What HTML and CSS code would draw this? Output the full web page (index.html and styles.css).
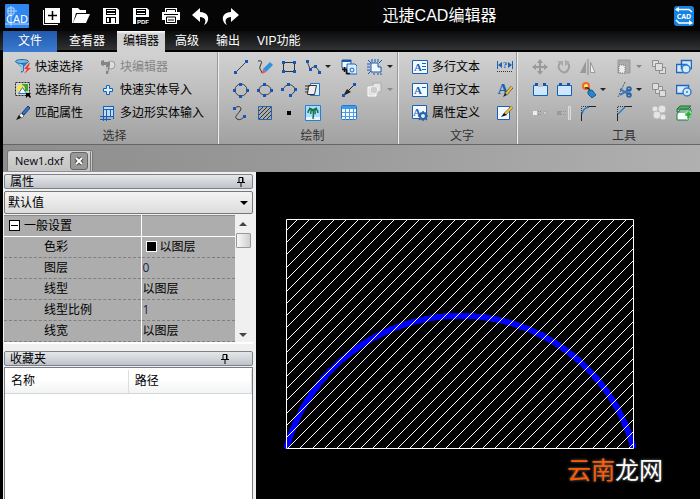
FILE: index.html
```
<!DOCTYPE html>
<html lang="zh-CN">

<head>
  <meta charset="UTF-8">
  <meta name="viewport" content="width=device-width, initial-scale=1.0">
  <title>迅捷CAD编辑器</title>
  <link rel="stylesheet" href="styles.css">
</head>

<body>
  <header class="titlebar">
    <svg class="logo" viewBox="0 0 24 24">
      <rect width="24" height="24" rx="1" fill="#2f86f0" />
      <path d="M2 7H12M6 2V22M3 4H9V10H3zM0 20H24" fill="none" stroke="#b9dcff" />
      <text x="12" y="19" text-anchor="middle" class="logo-text">CAD</text>
    </svg>
    <nav class="quick">
      <button aria-label="新建"><svg viewBox="0 0 20 20"><path d="M4 2H19V17H4z" fill="#fff" /><path d="M2.500 4V18.500H17" fill="none" stroke="#fff" /><path d="M11.500 5V14M7 9.500H16" stroke="#000" stroke-width="1.500" /></svg></button>
      <button aria-label="打开"><svg viewBox="0 0 20 20"><path d="M1 17V2H7L9 4H15V7H5L2 17z" fill="#fff" /><path d="M6 8H19L15 17H2z" fill="#fff" /></svg></button>
      <button aria-label="保存"><svg viewBox="0 0 20 20"><path d="M2 2H16L18 4V18H2z" fill="#fff" /><path d="M5 3H15V9H5zM5 11H15V17H5z" fill="#000" /><path d="M6 4H14V5H6zM6 7H14V8H6zM10 12H14V17H10zM6 12H8V16H6z" fill="#fff" /></svg></button>
      <button aria-label="导出PDF"><svg viewBox="0 0 20 20"><path d="M2 2H16L18 4V18H2z" fill="#fff" /><path d="M5 3H15V9H5z" fill="#000" /><path d="M6 4H14V5H6zM6 7H14V8H6z" fill="#fff" /><path d="M5 11H19V19H5z" fill="#000" /><text x="12" y="18" text-anchor="middle" class="pdf-text">PDF</text></svg></button>
      <button aria-label="打印"><svg viewBox="0 0 20 20"><path d="M4 2H16V6H19V14H16V18H4V14H1V6H4z" fill="#fff" /><path d="M5.500 6V3.500H14.500V6M3 8.500H17M5.500 11H14.500V16.500H5.500zM7 14H13" fill="none" stroke="#000" /></svg></button>
      <button aria-label="撤销"><svg viewBox="0 0 20 20"><path d="M1 9L9 2V6C15 6 18 10 17 14Q16 18 13 19C16 15 14 11 9 11V16z" fill="#fff" /></svg></button>
      <button aria-label="重做"><svg viewBox="0 0 20 20"><path d="M18 9L10 2V6C4 6 1 10 2 14Q3 18 6 19C3 15 5 11 10 11V16z" fill="#fff" /></svg></button>
    </nav>
    <h1>迅捷CAD编辑器</h1>
    <button class="convert" aria-label="转换">
      <svg viewBox="0 0 20 20"><rect width="20" height="20" rx="3" fill="#1683df" /><path d="M2 3.500H15L18 6M18 17H5L2 14" fill="none" stroke="#fff" stroke-width="1.500" /><path d="M1 3.500L5 1V6zM19 17L15 14V19z" fill="#fff" /><text x="10" y="13" text-anchor="middle" class="convert-text">CAD</text></svg>
    </button>
  </header>

  <nav class="menu">
    <a href="#" class="file">文件</a>
    <a href="#" class="viewer">查看器</a>
    <a href="#" class="active">编辑器</a>
    <a href="#">高级</a>
    <a href="#">输出</a>
    <a href="#">VIP功能</a>
  </nav>

  <main class="app">
    <div class="ribbon">
      <!-- 选择 -->
      <section class="group group-select">
        <div class="tools">
          <button><svg viewBox="0 0 16 16"><path d="M0 2L6 8V14L9 12V8L14 2z" fill="#2b7cba" /><path d="M3 3L7 7V12" fill="none" stroke="#8fc8ee" stroke-width="2" /><ellipse cx="7" cy="2.500" rx="6.500" ry="2" fill="#78b8e6" stroke="#226ba5" /><path d="M14 4L9 10H12L9 15L16 9H13L15 4z" fill="#f23a32" /></svg>快速选择</button>
          <button disabled><svg viewBox="0 0 16 16"><circle cx="11" cy="6" r="4" fill="#ddd" stroke="#999" /><path d="M1 3H10V6H1zM6 6H10L8 15H6zM1 2L4 1V7L1 6z" fill="#858585" /><path d="M7 8V12" stroke="#eee" /></svg>块编辑器</button>
          <button><svg viewBox="0 0 16 16"><path d="M.500 .500H14.500V13.500H.500z" fill="#d5d5d0" stroke="#222" stroke-dasharray="2 1" /><path d="M7 2H13V9H7z" fill="#38a535" /><circle cx="6" cy="7" r="4" fill="#f8e351" /><path d="M3.500 11.500L7.500 5.500L11.500 11.500z" fill="#f7fbff" stroke="#2679c9" /><path d="M11 11H16L14.500 12.500L16 15L15 16L13 14L11 16z" fill="#000" /></svg>选择所有</button>
          <button><svg viewBox="0 0 16 16"><path d="M6.500 3.500H9.500V6.500H12.500V9.500H9.500V12.500H6.500V9.500H3.500V6.500H6.500z" fill="#dceeff" stroke="#1162ba" /></svg>快速实体导入</button>
          <button><svg viewBox="0 0 16 16"><path d="M13 1L7 8L9 10L15 3z" fill="#3475c9" stroke="#163b77" /><path d="M6 8L9 11L7 13L4 11z" fill="#f2f2f2" stroke="#777" /><path d="M4 10L6 13L1 15z" fill="#111" /></svg>匹配属性</button>
          <button><svg viewBox="0 0 16 16"><path d="M3 1H14V12H3z" fill="#c4ddf5" /><path d="M3.500 1V16M13.500 1V14M3 1.500H14M0 11.500H14M6.500 4V16M3 4.500H14M0 14.500H11M10.500 4V12" fill="none" stroke="#1260ba" /></svg>多边形实体输入</button>
        </div>
        <h2>选择</h2>
      </section>

      <!-- 绘制 -->
      <section class="group group-draw">
        <div class="tools">
          <button aria-label="直线"><svg viewBox="0 0 16 16"><path d="M3 13L13 3" stroke="#444" /><path d="M1 12H4V15H1zM12 1H15V4H12z" class="node" /></svg></button>
          <button aria-label="手绘"><svg viewBox="0 0 16 16"><path d="M1 2Q6 1 4 5T3 10T5 14" fill="none" stroke="#333" /><path d="M13 3L16 6L9 13L6 10z" fill="#3391e2" /><path d="M6 10L9 13L5 15z" fill="#e8505a" /></svg></button>
          <button aria-label="矩形"><svg viewBox="0 0 16 16"><path d="M2.500 3.500H13.500V12.500H2.500z" fill="none" stroke="#333" /><path d="M1 2H4V5H1zM12 2H15V5H12zM1 11H4V14H1zM12 11H15V14H12z" class="node" /></svg></button>
          <button aria-label="多段线" class="drop"><svg viewBox="0 0 16 16"><path d="M2 2L5 10L10 7L15 13" fill="none" stroke="#444" /><path d="M1 1H4V4H1zM4 9H7V12H4zM9 6H12V9H9zM13 12H16V15H13z" class="node" /></svg></button>
          <button aria-label="插入块"><svg viewBox="0 0 16 16"><path d="M1 1H10V9H1z" fill="#f7fbff" stroke="#155caf" /><path d="M1 1H10V3H1z" fill="#155caf" /><path d="M6 5H14L16 7V15H6z" fill="#dcecff" stroke="#1667bd" /><path d="M1 10.500H6M3.500 8V13M5.500 11V14.500H9" fill="none" stroke="#111" stroke-width="1.500" /><circle cx="11" cy="11" r="2" fill="none" stroke="#1667bd" /></svg></button>
          <button aria-label="云线" class="drop"><svg viewBox="0 0 16 16"><path d="M4 4H11V8H14V13H4z" fill="#f0f7ff" stroke="#1758aa" /><path d="M1 1L4 4M5 0V3M8 0V3M11 0V3M15 1L12 4M0 5H3M0 8H3M0 11H3M1 15L4 12M7 16V14M11 16V14M14 16V14" stroke="#1758aa" /></svg></button>

          <button aria-label="圆"><svg viewBox="0 0 16 16"><circle cx="8" cy="8" r="6" fill="none" stroke="#444" /><path d="M6 1H9V4H6zM6 13H9V16H6zM0 7H3V10H0zM13 7H16V10H13z" class="node" /></svg></button>
          <button aria-label="椭圆"><svg viewBox="0 0 16 16"><ellipse cx="8" cy="8" rx="6" ry="5" fill="none" stroke="#444" /><path d="M6 1H9V4H6zM6 12H9V15H6zM0 7H3V10H0zM13 7H16V10H13z" class="node" /></svg></button>
          <button aria-label="圆弧"><svg viewBox="0 0 16 16"><path d="M2 7Q7 -1 13 5Q16 9 10 13" fill="none" stroke="#444" /><path d="M0 6H3V9H0zM6 1H9V4H6zM13 6H16V9H13zM8 12H11V15H8z" class="node" /></svg></button>
          <button aria-label="复制轮廓"><svg viewBox="0 0 16 16"><path d="M5.500 1.500H14.500V13.500H5.500z" fill="#dfeeff" stroke="#2375c8" /><path d="M3.500 3.500H11.500L9.500 12.500H2.500z" fill="#eee" stroke="#333" /><path d="M0 4H5M0 7H4M0 10H3" stroke="#333" /></svg></button>
          <button aria-label="引线"><svg viewBox="0 0 16 16"><path d="M3 13L14 2" stroke="#222" /><path d="M2 14L6 7L10 10z" fill="#222" /><path d="M1 12H4V15H1zM12 1H15V4H12z" class="node" /></svg></button>
          <button aria-label="布尔" class="drop off"><svg viewBox="0 0 16 16"><path d="M6 1H14V10H6z" fill="#e5e5e5" stroke="#aaa" /><path d="M1 5H9V14H1z" fill="#ddd" stroke="#fff" /><circle cx="7" cy="8" r="4" fill="#ccc" stroke="#f1f1f1" /></svg></button>

          <button aria-label="样条曲线"><svg viewBox="0 0 16 16"><path d="M2 3C5 0 10 2 7 6S1 12 4 14S10 13 12 11" fill="none" stroke="#333" /><path d="M0 2H3V5H0zM10 10H13V13H10z" class="node" /></svg></button>
          <button aria-label="填充"><svg viewBox="0 0 16 16"><path d="M1.500 1.500H14.500V14.500H1.500z" fill="#aaa" stroke="#2164b2" /><path d="M2 6L6 2M2 10L10 2M2 14L14 2M6 14L14 6M10 14L14 10" stroke="#333" /></svg></button>
          <button aria-label="点"><svg viewBox="0 0 16 16"><path d="M6 6H10V10H6z" fill="#000" /></svg></button>
          <button aria-label="图像"><svg viewBox="0 0 16 16"><path d="M.500 .500H15.500V15.500H.500z" fill="#a9ddff" stroke="#2282d1" /><path d="M1 12H15V15H1z" fill="#e8f4fb" /><path d="M8 14Q9 9 8 5M8 5Q3 3 3 8M8 5Q5 5 6 9M8 5Q13 3 13 8M8 5Q11 5 10 9M8 5L4 3M8 5L12 3" fill="none" stroke="#167349" stroke-width="1.500" /></svg></button>
          <button aria-label="表格"><svg viewBox="0 0 16 16"><rect x=".500" y=".500" width="15" height="14" rx="1" fill="#f5faff" stroke="#1d77d3" /><path d="M1 1H15V4H1z" fill="#3b9bf2" /><path d="M4.500 4V15M8.500 4V15M12.500 4V15M1 7.500H15M1 11.500H15" stroke="#4f9de0" /></svg></button>
        </div>
        <h2>绘制</h2>
      </section>

      <!-- 文字 -->
      <section class="group group-text">
        <div class="tools">
          <button><svg viewBox="0 0 16 16"><path d="M.500 1.500H15.500V14.500H.500z" class="sheet" /><text x="6" y="12" text-anchor="middle" class="letter">A</text><path d="M10 4.500H14M10 7.500H14M10 10.500H14" stroke="#1862b6" /></svg>多行文本</button>
          <button aria-label="标注"><svg viewBox="0 0 16 16"><path d="M.500 2V10M15.500 2V10" stroke="#1862b6" /><path d="M1 6L5 3V9zM15 6L11 3V9z" fill="#1862b6" /><text x="8" y="9" text-anchor="middle" class="letter small">?</text><path d="M0 12.500H16" stroke="#333" stroke-dasharray="1 1" /></svg></button>
          <button><svg viewBox="0 0 16 16"><path d="M.500 1.500H15.500V14.500H.500z" class="sheet" /><text x="6" y="12" text-anchor="middle" class="letter">A</text><path d="M10 5.500H14" stroke="#1862b6" /></svg>单行文本</button>
          <button aria-label="文字样式"><svg viewBox="0 0 16 16"><text x="6" y="12" text-anchor="middle" class="letter big">A</text><path d="M15 5L9 12" stroke="#444" stroke-width="3" /><path d="M15 5L9 12" stroke="#f1c232" stroke-width="2" /><path d="M8 11L10 13L6 15z" fill="#222" /></svg></button>
          <button><svg viewBox="0 0 16 16"><path d="M.500 .500H14.500V13.500H.500z" class="sheet" /><text x="5" y="11" text-anchor="middle" class="letter">A</text><circle cx="11" cy="11" r="3" fill="#dcecff" stroke="#2b62a4" stroke-width="2" /><path d="M11 6V8M11 14V16M6 11H8M14 11H16M8 8L9 9M13 13L15 15M15 7L13 9M9 13L7 15" stroke="#2b62a4" stroke-width="1.500" /></svg>属性定义</button>
          <button aria-label="编辑文字"><svg viewBox="0 0 16 16"><path d="M.500 1.500H12.500V14.500H.500z" class="sheet" /><path d="M15 2L8 9" stroke="#444" stroke-width="3" /><path d="M15 2L8 9" stroke="#f1c232" stroke-width="2" /><path d="M7 8L10 10L4 12z" fill="#111" /></svg></button>
        </div>
        <h2>文字</h2>
      </section>

      <!-- 工具 -->
      <section class="group group-tools">
        <div class="tools">
          <button aria-label="移动"><svg viewBox="0 0 16 16"><path d="M8 2V14M2 8H14" stroke="#999" stroke-width="2" /><path d="M8 0L11 4H5zM8 16L5 12H11zM0 8L4 5V11zM16 8L12 5V11z" fill="#999" /></svg></button>
          <button aria-label="旋转"><svg viewBox="0 0 16 16"><path d="M5 3Q0 8 5 12T13 9M10 3Q15 6 12 11" fill="none" stroke="#a0a0a0" stroke-width="2" /><path d="M1 2H7V7zM9 7V1L14 3z" fill="#aaa" /></svg></button>
          <button aria-label="镜像"><svg viewBox="0 0 16 16"><path d="M6 2V14H0z" fill="#989898" /><path d="M10.500 3V13.500H15z" fill="#eee" stroke="#999" /><path d="M8 0V16" stroke="#888" /></svg></button>
          <button aria-label="缩放" class="drop off"><svg viewBox="0 0 16 16"><path d="M2 1H14V14H2z" fill="#aaa" stroke="#999" /><path d="M3 6H9V14H3z" fill="#ececec" stroke="#777" stroke-dasharray="1 1" /></svg></button>
          <button aria-label="前置"><svg viewBox="0 0 16 16"><path d="M1.500 1.500H7.500V7.500H1.500zM8.500 8.500H14.500V14.500H8.500z" class="gray-box" /><path d="M4.500 4.500H11.500V11.500H4.500z" class="gray-box" /></svg></button>
          <button aria-label="区域"><svg viewBox="0 0 16 16"><path d="M5.500 1.500H15.500V9.500H5.500zM.500 5.500H10.500V13.500H.500z" fill="#d9ebff" stroke="#1d68bd" stroke-width="1.500" /><circle cx="10" cy="10" r="4" fill="#d5e9ff" stroke="#347ec9" stroke-width="1.500" /></svg></button>

          <button aria-label="打断"><svg viewBox="0 0 16 16"><path d="M1.500 3.500H15.500V13.500H1.500z" fill="#cfe6ff" stroke="#1460b5" /><path d="M6 3H11V5H6z" fill="#c1c1c1" /><path d="M3 1H6V4H3zM11 1H14V4H11z" class="node" /></svg></button>
          <button aria-label="合并"><svg viewBox="0 0 16 16"><path d="M1.500 3.500H15.500V13.500H1.500z" fill="#cfe6ff" stroke="#1460b5" /><path d="M3 1H6V4H3zM11 1H14V4H11z" class="node" /></svg></button>
          <button aria-label="分解" class="drop"><svg viewBox="0 0 16 16"><circle cx="6" cy="4" r="4" fill="#f26722" /><circle cx="6" cy="4" r="2" fill="#ffe777" /><path d="M5 6Q9 5 10 9" fill="none" stroke="#333" stroke-width="1.500" /><path d="M8 9L12 8L16 13L12 16L8 12z" fill="#2586cb" stroke="#185994" /></svg></button>
          <button aria-label="修剪" class="drop"><svg viewBox="0 0 16 16"><path d="M9 0L2 15" stroke="#555" stroke-dasharray="2 1" /><path d="M4 7L14 13M4 13L14 7" stroke="#3574b7" stroke-width="2" /><circle cx="13" cy="7" r="2" fill="none" stroke="#235fa5" stroke-width="1.500" /><circle cx="13" cy="13" r="2" fill="none" stroke="#235fa5" stroke-width="1.500" /></svg></button>
          <button aria-label="后置"><svg viewBox="0 0 16 16"><path d="M4.500 4.500H11.500V11.500H4.500z" class="gray-box" /><path d="M1.500 1.500H7.500V7.500H1.500zM8.500 8.500H14.500V14.500H8.500z" class="gray-box" /></svg></button>
          <button aria-label="查找区域"><svg viewBox="0 0 16 16"><path d="M.500 3.500H12.500V11.500H.500z" fill="#d9ebff" stroke="#1d68bd" stroke-width="1.500" /><circle cx="11" cy="10" r="4" fill="#d5e9ff" stroke="#347ec9" stroke-width="1.500" /><circle cx="11" cy="10" r="1" fill="#347ec9" /></svg></button>

          <button aria-label="对齐"><svg viewBox="0 0 16 16"><path d="M1 6H5V10H1z" fill="#eee" /><path d="M6 6.500H10M6 9.500H10" stroke="#888" stroke-dasharray="1 1" /><path d="M11.500 6.500H14.500V9.500H11.500z" fill="#ccc" stroke="#aaa" /></svg></button>
          <button aria-label="延伸"><svg viewBox="0 0 16 16"><path d="M1 6H5V10H1z" fill="#999" /><path d="M5 6.500H11M5 9.500H11" stroke="#999" stroke-dasharray="1 1" /><path d="M12.500 1.500H14.500V14.500H12.500z" fill="#bbb" stroke="#ddd" /></svg></button>
          <button aria-label="圆角"><svg viewBox="0 0 16 16"><path d="M1.500 16V8M8 1.500H16" stroke="#222" /><path d="M1.500 8V1.500H8" fill="none" stroke="#333" stroke-dasharray="1 1" /><path d="M2 9Q3 3 9 2" fill="none" stroke="#267ccb" stroke-width="1.500" /></svg></button>
          <button aria-label="倒角"><svg viewBox="0 0 16 16"><path d="M1.500 16V9M9 1.500H16" stroke="#222" /><path d="M1.500 9V1.500H9" fill="none" stroke="#333" stroke-dasharray="1 1" /><path d="M2 9L9 2" stroke="#267ccb" stroke-width="1.500" /></svg></button>
          <button aria-label="编组"><svg viewBox="0 0 16 16"><circle cx="4" cy="4" r="3" class="ball" /><circle cx="11" cy="4" r="4" class="ball" /><circle cx="6" cy="10" r="4" class="ball" /><circle cx="12" cy="12" r="3" class="ball" /></svg></button>
          <button aria-label="新建图层"><svg viewBox="0 0 16 16"><path d="M1 9L4 5H15V12L12 15H1z" fill="#f5fff5" stroke="#217747" /><path d="M1 4L4 1H15L12 4z" fill="#58ae65" stroke="#167738" /><path d="M1 4V7H12L15 3" fill="none" stroke="#167738" /><path d="M9 8H11V6H14V8H16V11H14V14H11V11H9z" fill="#2daf3c" stroke="#fff" stroke-width=".500" /></svg></button>
        </div>
        <h2>工具</h2>
      </section>
    </div>

    <div class="doc-tabs">
      <div class="doc-tab">
        <span>New1.dxf</span>
        <button aria-label="关闭"><svg viewBox="0 0 10 10"><path d="M2 2L8 8M8 2L2 8" stroke="#564d3a" stroke-width="4" /><path d="M2 2L8 8M8 2L2 8" stroke="#fff" stroke-width="2" /></svg></button>
      </div>
    </div>

    <div class="workspace">
      <aside class="side">
        <div class="panel-title">
          <span>属性</span>
          <button aria-label="固定属性"><svg viewBox="0 0 8 10"><path d="M2 .500H6V5.500H2zM0 5.500H8M4 6V10M5.500 1V5" fill="none" stroke="#000" /></svg></button>
        </div>
        <div class="preset">
          <select aria-label="默认值">
            <option>默认值</option>
          </select>
        </div>
        <div class="props">
          <table>
            <tr class="section"><th><i class="minus"></i>一般设置</th><td></td></tr>
            <tr><th>色彩</th><td><i class="swatch"></i>以图层</td></tr>
            <tr><th>图层</th><td class="num">0</td></tr>
            <tr><th>线型</th><td>以图层</td></tr>
            <tr><th>线型比例</th><td class="num">1</td></tr>
            <tr><th>线宽</th><td>以图层</td></tr>
          </table>
          <div class="scroll">
            <i class="up"></i>
            <i class="thumb"></i>
            <i class="down"></i>
          </div>
        </div>

        <div class="panel-title favorites-title">
          <span>收藏夹</span>
          <button aria-label="固定收藏夹"><svg viewBox="0 0 8 10"><path d="M2 .500H6V5.500H2zM0 5.500H8M4 6V10M5.500 1V5" fill="none" stroke="#000" /></svg></button>
        </div>
        <div class="favorites">
          <table>
            <tr><th>名称</th><th>路径</th></tr>
          </table>
        </div>
      </aside>

      <section class="drawing">
        <svg class="sheet-area">
          <clipPath id="frame"><rect x="30" y="47" width="347" height="229" /></clipPath>
          <path d="M31 274A180 180 0 0 1 377 274" fill="none" stroke="#00f" stroke-width="6" stroke-linecap="round" shape-rendering="crispEdges" />
          <path id="hatch" clip-path="url(#frame)" stroke="#fff" shape-rendering="crispEdges" />
          <path d="M30.500 47.500H377.500V276.500H30.500z" fill="none" stroke="#fff" />
        </svg>
        <div class="watermark"><b>云南</b>龙网</div>
      </section>
    </div>
  </main>

  <script>
    // 45 degree hatch lines inside the frame, snapped to pixel centres
    const step = 12.175;
    const frameTop = 47.5;
    const frameBottom = 276.5;
    let d = '';
    for (let i = 0; i < 48; i++) {
      const x = 41.5 + Math.round(i * step);
      d += `M${x} ${frameTop}L${x - (frameBottom - frameTop)} ${frameBottom}`;
    }
    document.querySelector('#hatch').setAttribute('d', d);
  </script>
</body>

</html>
```
FILE: styles.css
```
* {
  box-sizing: border-box;
}

body {
  margin: 0;
  min-height: 100vh;
  display: flex;
  flex-direction: column;
  background: #000;
  color: #000;
  font: 12px/16px "Liberation Sans", "Noto Sans CJK SC", sans-serif;
}

button {
  margin: 0;
  padding: 0;
  border: 0;
  background: none;
  color: inherit;
  font: inherit;
}

svg {
  display: block;
  flex: none;
}

h1,
h2 {
  margin: 0;
  font-weight: normal;
}

table {
  border-collapse: collapse;
  table-layout: fixed;
  width: 100%;
}

th,
td {
  padding: 0;
  font-weight: normal;
  text-align: left;
}

/* title bar */
.titlebar {
  display: flex;
  align-items: center;
  height: 31px;
  padding: 0 6px 0 5px;
  background: #050505;
  color: #fff;
}

.logo {
  width: 24px;
  height: 24px;
}

.logo-text {
  fill: #fff;
  font: 11px "Noto Sans", sans-serif;
}

.quick {
  display: flex;
  gap: 10px;
  margin-left: 12px;
}

.quick svg {
  width: 20px;
  height: 20px;
}

.pdf-text {
  fill: #fff;
  font: bold 6px "Liberation Sans", sans-serif;
}

.titlebar h1 {
  flex: 1;
  padding-right: 36px;
  font-size: 16px;
  line-height: 24px;
  text-align: center;
}

.convert svg {
  width: 20px;
  height: 20px;
}

.convert-text {
  fill: #fff;
  font: bold 7px "Noto Sans", sans-serif;
}

/* menu */
.menu {
  display: flex;
  height: 21px;
  padding-left: 3px;
  background: linear-gradient(#0b0b0b, #303234 90%, #000 91%);
}

.menu a {
  padding: 0 9px 0 8px;
  color: #fff;
  line-height: 21px;
  text-decoration: none;
}

.menu .file {
  width: 54px;
  padding: 0;
  background: linear-gradient(#2159ad, #3b7bd0);
  text-align: center;
}

.menu .viewer {
  padding: 0 12px;
}

.menu .active {
  padding: 0 6px;
  margin-right: 2px;
  background: linear-gradient(#fff, #d0d0d0 3px);
  color: #000;
}

/* ribbon */
.app {
  flex: 1;
  display: flex;
  flex-direction: column;
  margin-left: 3px;
}

.ribbon {
  display: flex;
  border-bottom: 1px solid #666;
  background: linear-gradient(#d2d2d2, #bdbdbd 45%, #a1a1a1);
}

.group {
  padding-top: 3px;
  border-right: 1px solid #eee;
  box-shadow: inset -1px 0 #999;
}

.group h2 {
  padding: 4px 0 0 8px;
  font-size: 12px;
  line-height: 16px;
  text-align: center;
  color: #333;
}

.tools {
  display: grid;
  grid-auto-rows: 23px;
}

.tools button {
  display: flex;
  align-items: center;
  gap: 4px;
  white-space: nowrap;
}

.tools button:disabled {
  color: #858585;
}

.tools svg {
  width: 16px;
  height: 16px;
}

.drop::after {
  content: "";
  border: 3px solid transparent;
  border-top-color: #222;
  border-bottom: 0;
}

.drop.off::after {
  border-top-color: #888;
}

.group-select {
  flex: 0 0 216px;
}

.group-select .tools {
  padding-left: 12px;
  grid-template-columns: 85px 1fr;
}

.group-draw {
  flex: 0 0 180px;
}

.group-draw .tools {
  padding-left: 14px;
  grid-template-columns: 24px 24px 24px 36px 26px 24px;
}

.group-text {
  flex: 0 0 119px;
}

.group-text .tools {
  padding-left: 13px;
  grid-template-columns: 85px 16px;
}

.group-tools {
  flex: 1;
  border: 0;
  box-shadow: none;
}

.group-tools .tools {
  padding-left: 14px;
  grid-template-columns: 24px 24px 36px 35px 25px 16px;
}

.group-tools h2 {
  width: 204px;
}

.node {
  fill: #1555b5;
}

.sheet {
  fill: #f4f9ff;
  stroke: #1862b6;
}

.letter {
  fill: #1862b6;
  font: bold 11px "Liberation Serif", serif;
}

.letter.small {
  font-size: 9px;
}

.letter.big {
  font-size: 15px;
}

.gray-box {
  fill: #ddd;
  stroke: #8e8e8e;
}

.ball {
  fill: #e5e5e5;
  stroke: #bbb;
}

/* document tabs */
.doc-tabs {
  display: flex;
  height: 27px;
  padding: 5px 4px 0;
  background: linear-gradient(90deg, #8e8e8e, #989898 40%, #b0b0b0);
}

.doc-tab {
  display: flex;
  align-items: center;
  justify-content: space-between;
  width: 86px;
  height: 21px;
  padding: 0 2px 0 7px;
  border: 1px solid #777;
  border-right: 3px double #777;
  border-bottom: 0;
  border-radius: 3px 3px 0 0;
  background: linear-gradient(#d5d5d5, #c3c3c3);
  font-family: "Open Sans", sans-serif;
  font-size: 11px;
}

.doc-tab button {
  display: grid;
  place-items: center;
  width: 18px;
  height: 18px;
  border: 1px solid #666;
  border-radius: 3px;
  background: #999;
}

.doc-tab svg {
  width: 10px;
  height: 10px;
}

/* side panels */
.workspace {
  flex: 1;
  display: flex;
}

.side {
  flex: 0 0 253px;
  display: flex;
  flex-direction: column;
  padding: 2px 3px 0 1px;
  background: #f0f0f0;
}

.panel-title {
  display: flex;
  align-items: center;
  justify-content: space-between;
  height: 15px;
  padding: 0 7px 0 5px;
  border: 1px solid #7d8087;
  border-radius: 2px;
  background: linear-gradient(#e5e7ea, #bfc3c9);
}

.panel-title svg {
  width: 8px;
  height: 10px;
}

.preset {
  position: relative;
  margin-top: 2px;
}

.preset select {
  appearance: none;
  display: block;
  width: 100%;
  height: 23px;
  padding: 0 3px;
  border: 1px solid #777;
  border-radius: 2px;
  background: linear-gradient(#f4f4f4, #dcdcdc);
  color: #000;
  font: inherit;
}

.preset::after {
  content: "";
  position: absolute;
  top: 10px;
  right: 5px;
  border: 4px solid transparent;
  border-top-color: #000;
  border-bottom: 0;
}

.props {
  display: flex;
  margin-top: 1px;
  padding-right: 2px;
  border-bottom: 2px solid #fff;
}

.props table {
  flex: 1;
  background: #adadad;
}

.props th,
.props td {
  height: 21px;
  border-bottom: 1px dashed #808080;
}

.props th {
  width: 137px;
  padding-left: 40px;
  border-right: 1px solid #fff;
}

.props td {
  padding-left: 1px;
}

.props .section th,
.props .section td {
  border-top: 1px solid #888;
  border-bottom: 1px solid #fff;
}

.props .section th {
  padding-left: 5px;
}

.props .num {
  color: #1b2747;
  font-family: "Open Sans", sans-serif;
}

.minus,
.swatch {
  display: inline-block;
  width: 11px;
  height: 11px;
  vertical-align: -1px;
}

.minus {
  margin-right: 4px;
  border: 1px solid #000;
  background: linear-gradient(#000, #000) center / 7px 1px no-repeat #fff;
}

.swatch {
  margin: 0 3px;
  border: 1px solid #fff;
  background: #000;
}

.scroll {
  display: flex;
  flex-direction: column;
  align-items: center;
  width: 16px;
  padding: 7px 0 5px;
  background: #f0f0f0;
}

.up,
.down {
  border: 4px solid transparent;
}

.up {
  border-top: 0;
  border-bottom-color: #444;
}

.down {
  margin-top: auto;
  border-bottom: 0;
  border-top-color: #444;
}

.thumb {
  width: 15px;
  height: 15px;
  margin-top: 7px;
  border: 1px solid #999;
  border-radius: 1px;
  background: linear-gradient(90deg, #f8f8f8, #cfcfcf);
}

.favorites-title {
  margin-top: 7px;
  padding-right: 23px;
}

.favorites {
  flex: 1;
  margin-top: 1px;
  padding-top: 2px;
  border: 1px solid #777b87;
  border-width: 1px 1px 0;
  background: #fff;
}

.favorites th {
  height: 23px;
  padding-left: 6px;
  border-right: 1px solid #ddd;
  border-bottom: 1px solid #d5d5d5;
  background: linear-gradient(#fff 40%, #f2f3f4);
}

/* drawing area */
.drawing {
  position: relative;
  flex: 1;
  background: #000;
}

.sheet-area {
  position: absolute;
  width: 100%;
  height: 100%;
}

.watermark {
  position: absolute;
  right: 37px;
  bottom: 12px;
  color: #fff;
  font-size: 24px;
  line-height: 32px;
  text-shadow: 0 0 3px #777;
}

.watermark b {
  color: #ff5a00;
  font-weight: normal;
}
```
